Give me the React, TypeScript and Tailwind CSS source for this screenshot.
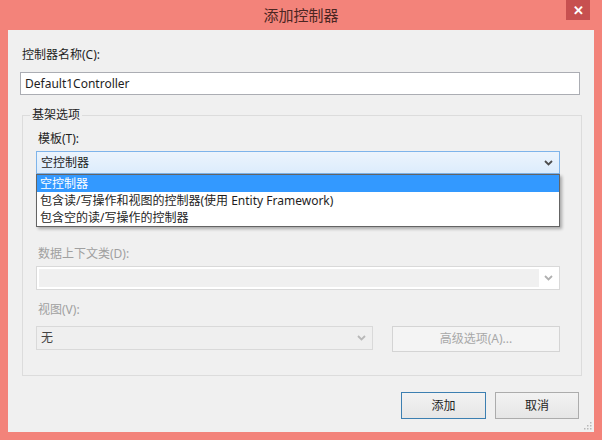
import { useState } from 'react'

const font = { fontFamily: '"Noto Sans", "Noto Sans CJK SC", sans-serif' }

const templates = [
  '空控制器',
  '包含读/写操作和视图的控制器(使用 Entity Framework)',
  '包含空的读/写操作的控制器',
]

const Chevron = ({ color }: { color: string }) => (
  <svg width="9" height="6" viewBox="0 0 9 6">
    <path d="M1 1 L4.5 4.5 L8 1" fill="none" stroke={color} strokeWidth="1.8" />
  </svg>
)

const SizeGrip = () => (
  <svg width="10" height="10" viewBox="0 0 10 10" className="absolute right-[2px] bottom-[2px]">
    {[
      [8, 2],
      [5, 5],
      [8, 5],
      [2, 8],
      [5, 8],
      [8, 8],
    ].map(([x, y]) => (
      <rect key={`${x}-${y}`} x={x} y={y} width="1.5" height="1.5" fill="#b8b8b8" />
    ))}
  </svg>
)

const App = () => {
  const [selected] = useState(0)

  return (
    <div className="w-[602px] h-[440px] bg-[#f3837a] flex flex-col text-[12px] text-[#1e1e1e]" style={font}>
      {/* title bar */}
      <div className="h-[30px] grid grid-cols-[1fr_auto_1fr] items-start">
        <div />
        <div className="pt-[4px] text-[15px] leading-[22px] text-[#4b2622]">添加控制器</div>
        <div className="flex justify-end pr-[12px]">
          <div className="w-[24px] h-[20px] bg-[#c75050] flex items-center justify-center text-white text-[13px] font-bold leading-none">
            ✕
          </div>
        </div>
      </div>

      {/* client area */}
      <div className="relative mx-[8px] h-[402px] bg-[#f0f0f0] flex flex-col px-[12px]">
        <div className="mt-[17px] ml-[2px] leading-[16px]">控制器名称(C):</div>
        <div className="mt-[9px] h-[23px] w-[560px] bg-white border border-[#abadb3] flex items-center pl-[4px]">
          Default1Controller
        </div>

        {/* group box */}
        <div className="relative mt-[20px] ml-[2px] w-[560px] h-[261px] border border-[#dcdcdc] flex flex-col px-[13px]">
          <div className="absolute -top-[9px] left-[7px] px-[2px] bg-[#f0f0f0] leading-[16px]">基架选项</div>

          <div className="mt-[15px] ml-[2px] leading-[16px]">模板(T):</div>
          <div className="relative mt-[4px]">
            <div className="h-[23px] w-[524px] border border-[#7eb4ea] bg-gradient-to-b from-[#ecf4fc] to-[#dcecfc] flex items-center justify-between pl-[4px] pr-[6px]">
              <span>{templates[selected]}</span>
              <Chevron color="#4d4d4d" />
            </div>
            {/* open list */}
            <div className="absolute left-0 top-[23px] w-[524px] bg-white border border-[#646464] shadow-[2px_2px_3px_rgba(0,0,0,0.3)] z-10">
              {templates.map((t, i) => (
                <div
                  key={t}
                  className={`h-[17px] leading-[17px] pl-[3px] ${i === selected ? 'bg-[#3399ff] text-white' : ''}`}
                >
                  {t}
                </div>
              ))}
            </div>
          </div>

          <div className="mt-[72px] ml-[2px] leading-[16px] text-[#a0a0a0]">数据上下文类(D):</div>
          <div className="mt-[4px] h-[24px] w-[524px] border border-[#d9d9d9] bg-white flex p-[2px]">
            <div className="flex-1 bg-[#f0f0f0]" />
            <div className="w-[18px] flex items-center justify-center">
              <Chevron color="#b0b0b0" />
            </div>
          </div>

          <div className="mt-[12px] ml-[2px] leading-[16px] text-[#a0a0a0]">视图(V):</div>
          <div className="mt-[8px] flex items-start gap-[19px]">
            <div className="h-[24px] w-[337px] border border-[#d9d9d9] bg-[#efefef] flex items-center justify-between pl-[4px] pr-[6px] text-[#444]">
              <span>无</span>
              <Chevron color="#b8b8b8" />
            </div>
            <div className="h-[26px] w-[168px] border border-[#d4d4d4] bg-[#f4f4f4] flex items-center justify-center text-[#a8a8a8]">
              高级选项(A)...
            </div>
          </div>
        </div>

        {/* dialog buttons */}
        <div className="mt-[16px] flex justify-end gap-[9px] pr-[3px]">
          <div className="h-[27px] w-[85px] border border-[#3c7fb1] bg-gradient-to-b from-[#f2f2f2] to-[#e6e6e6] flex items-center justify-center">
            添加
          </div>
          <div className="h-[27px] w-[84px] border border-[#acacac] bg-gradient-to-b from-[#f2f2f2] to-[#e6e6e6] flex items-center justify-center">
            取消
          </div>
        </div>

        <SizeGrip />
      </div>
    </div>
  )
}

export default App
